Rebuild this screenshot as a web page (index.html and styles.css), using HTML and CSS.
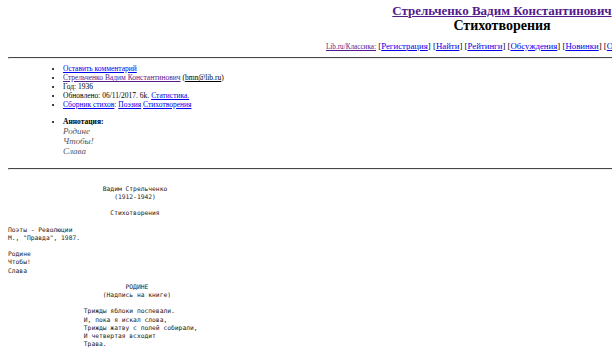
FILE: index.html
```html
<!DOCTYPE html>
<html>
  <head>
    <meta charset="UTF-8">
    <link rel="stylesheet" href="styles.css">
  </head>
  <body>
    <div class="page">
      <h2 class="title">
        <a class="visited" href="#">Стрельченко Вадим Константинович</a><br>
        Стихотворения
      </h2>
      <div class="nav">
        <a class="visited label" href="#">Lib.ru/Классика:</a>
        [<a href="#">Регистрация</a>]
        [<a href="#">Найти</a>]
        [<a href="#">Рейтинги</a>]
        [<a href="#">Обсуждения</a>]
        [<a href="#">Новинки</a>]
        [<a href="#">Обзоры</a>]
        [<a href="#">Помощь</a>]
      </div>
      <hr>
      <ul class="info">
        <li><a href="#">Оставить комментарий</a></li>
        <li><a class="visited" href="#">Стрельченко Вадим Константинович</a> (<u>bmn@lib.ru</u>)</li>
        <li>Год: 1936</li>
        <li>Обновлено: 06/11/2017. 6k. <a href="#">Статистика.</a></li>
        <li><a href="#">Сборник стихов</a>: <a href="#">Поэзия</a> <a href="#">Стихотворения</a></li>
      </ul>
      <ul class="annotation">
        <li><b>Аннотация:</b>
          <div class="annotation-text">Родине<br>Чтобы!<br>Слава</div>
        </li>
      </ul>
      <hr>
<pre class="text">                         Вадим Стрельченко
                            (1912-1942)

                           Стихотворения

Поэты - Революции
М., "Правда", 1987.

Родине
Чтобы!
Слава

                               РОДИНЕ
                         (Надпись на книге)

                    Трижды яблоки поспевали.
                    И, пока я искал слова,
                    Трижды жатву с полей собирали,
                    И четвертая всходит
                    Трава.
</pre>
    </div>
  </body>
</html>
```
FILE: styles.css
```css
html, body {
  overflow: hidden;
}

body {
  margin: 0;
  padding: 0 8px;
  background: #fff;
  color: #000;
  font-family: "Liberation Serif", serif;
}

.page {
  width: 988px;
}

a {
  color: #0000ee;
}

a.visited {
  color: #551a8b;
}

.title {
  margin: 0;
  padding-top: 3px;
  font-size: 14px;
  line-height: 15px;
  text-align: center;
}

.title a {
  font-size: 13px;
}

.nav {
  margin-top: 9px;
  font-size: 8.8px;
  line-height: 9px;
  text-align: center;
}

.nav .label {
  font-size: 7.2px;
}

hr {
  margin: 5px 0 0;
  border: 1px inset #eee;
  border-top-color: #9a9a9a;
  height: 0;
}

.info, .annotation {
  margin: 0;
  padding-left: 55px;
  font-size: 7.5px;
  line-height: 9px;
}

.info {
  margin-top: 5px;
}

.annotation {
  margin-top: 8px;
  margin-bottom: 12px;
}

.annotation-text {
  color: #555;
  font-style: italic;
  font-size: 9px;
  line-height: 10px;
}

.text {
  margin: 15px 0 0;
  color: #222;
  font-family: "DejaVu Sans Mono", monospace;
  font-size: 6.3px;
  line-height: 8.15px;
}
```
